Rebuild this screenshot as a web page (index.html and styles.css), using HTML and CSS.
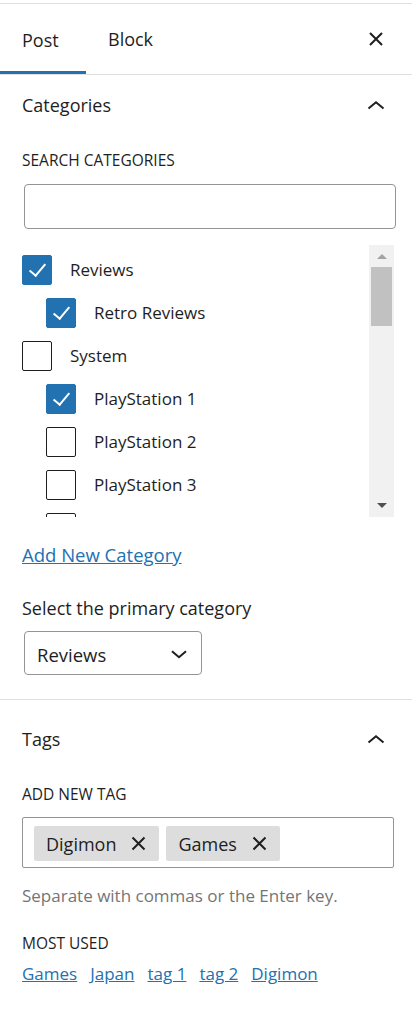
FILE: index.html
```html
<html>
	<head>
		<title>Post settings</title>
		<link rel="stylesheet" href="styles.css">
	</head>
	<body>
	<div class="sidebar">
		<div class="tabs">
			<div class="tab active">Post</div>
			<div class="tab">Block</div>
			<div class="close">
				<svg width="16" height="16" viewBox="0 0 16 16"><path d="M2 2L14 14M14 2L2 14" stroke="#1e1e1e" stroke-width="2" fill="none"/></svg>
			</div>
		</div>

		<div class="panel">
			<div class="panel-title">
				<span>Categories</span>
				<svg class="chev" width="18" height="10" viewBox="0 0 18 10"><path d="M1.5 8.5L9 2.2L16.5 8.5" stroke="#1e1e1e" stroke-width="2" fill="none"/></svg>
			</div>
			<div class="label">SEARCH CATEGORIES</div>
			<input class="search" type="text">

			<div class="catlist">
				<div class="items">
					<div class="row"><span class="box checked"></span>Reviews</div>
					<div class="row child"><span class="box checked"></span>Retro Reviews</div>
					<div class="row"><span class="box"></span>System</div>
					<div class="row child"><span class="box checked"></span>PlayStation 1</div>
					<div class="row child"><span class="box"></span>PlayStation 2</div>
					<div class="row child"><span class="box"></span>PlayStation 3</div>
					<div class="row child"><span class="box"></span></div>
				</div>
				<div class="scrollbar">
					<div class="arrow up"></div>
					<div class="thumb"></div>
					<div class="spacer"></div>
					<div class="arrow down"></div>
				</div>
			</div>

			<a class="link addnew" href="#">Add New Category</a>
			<div class="primary-label">Select the primary category</div>
			<div class="select">
				<span>Reviews</span>
				<svg width="16" height="9" viewBox="0 0 16 9"><path d="M1 1.2L8 7.2L15 1.2" stroke="#1e1e1e" stroke-width="2" fill="none"/></svg>
			</div>
		</div>

		<div class="panel tags-panel">
			<div class="panel-title">
				<span>Tags</span>
				<svg class="chev" width="18" height="10" viewBox="0 0 18 10"><path d="M1.5 8.5L9 2.2L16.5 8.5" stroke="#1e1e1e" stroke-width="2" fill="none"/></svg>
			</div>
			<div class="label">ADD NEW TAG</div>
			<div class="token-field">
				<span class="token">Digimon <svg width="15" height="15" viewBox="0 0 15 15"><path d="M1.5 1.5L13.5 13.5M13.5 1.5L1.5 13.5" stroke="#1e1e1e" stroke-width="2" fill="none"/></svg></span>
				<span class="token">Games <svg width="15" height="15" viewBox="0 0 15 15"><path d="M1.5 1.5L13.5 13.5M13.5 1.5L1.5 13.5" stroke="#1e1e1e" stroke-width="2" fill="none"/></svg></span>
			</div>
			<div class="help">Separate with commas or the Enter key.</div>
			<div class="label most">MOST USED</div>
			<div class="most-used">
				<a class="link" href="#">Games</a>
				<a class="link" href="#">Japan</a>
				<a class="link" href="#">tag 1</a>
				<a class="link" href="#">tag 2</a>
				<a class="link" href="#">Digimon</a>
			</div>
		</div>
	</div>
	</body>
</html>
```

FILE: styles.css
```css
body{
	margin: 0;
	background: #fff;
	color: #1e1e1e;
	font-family: "Open Sans", "Noto Sans", sans-serif;
	font-size: 17px;
}
.sidebar{
	width: 412px;
	padding-top: 3px;
}
.tabs{
	display: flex;
	align-items: center;
	height: 70px;
	border-top: 1px solid #e0e0e0;
	border-bottom: 1px solid #e0e0e0;
}
.tab{
	height: 70px;
	line-height: 70px;
	padding: 0 22px;
	font-size: 18px;
	box-sizing: border-box;
}
.tab.active{
	width: 86px;
	border-bottom: 3px solid #2271b1;
	line-height: 67px;
	padding-top: 3px;
}
.close{
	margin-left: auto;
	margin-right: 28px;
	height: 16px;
}
.panel{
	padding: 0 16px 24px 22px;
	border-bottom: 1px solid #e0e0e0;
}
.panel-title{
	display: flex;
	justify-content: space-between;
	align-items: center;
	height: 60px;
	font-size: 18px;
}
.chev{
	margin-right: 11px;
}
.label{
	margin-top: 13px;
	font-size: 15.5px;
	line-height: 24px;
}
.search{
	display: block;
	width: 372px;
	height: 45px;
	margin: 12px 0 0 2px;
	border: 1px solid #949494;
	border-radius: 4px;
}
.catlist{
	display: flex;
	height: 272px;
	margin-top: 16px;
	overflow: hidden;
}
.items{
	flex: 1;
	padding-top: 10px;
}
.row{
	display: flex;
	align-items: center;
	height: 30px;
	margin-bottom: 13px;
	line-height: 30px;
}
.row.child{
	padding-left: 24px;
}
.box{
	width: 30px;
	height: 30px;
	box-sizing: border-box;
	border: 1px solid #1e1e1e;
	border-radius: 2px;
	margin-right: 18px;
	flex: none;
	position: relative;
}
.box.checked{
	background: #2271b1;
	border-color: #2271b1;
}
.box.checked::after{
	content: "";
	position: absolute;
	left: 10px;
	top: 4px;
	width: 7px;
	height: 14px;
	border-right: 2px solid #fff;
	border-bottom: 2px solid #fff;
	transform: rotate(40deg);
}
.scrollbar{
	width: 25px;
	margin-right: 2px;
	background: #f1f1f1;
	display: flex;
	flex-direction: column;
	align-items: center;
}
.arrow{
	width: 0;
	height: 0;
	border-left: 5px solid transparent;
	border-right: 5px solid transparent;
	margin: 9px 0 8px;
}
.arrow.up{
	border-bottom: 5px solid #a3a3a3;
}
.arrow.down{
	border-top: 5px solid #505050;
	margin: 8px 0 9px;
}
.thumb{
	width: 21px;
	height: 59px;
	background: #c1c1c1;
}
.spacer{
	flex: 1;
}
.link{
	color: #2271b1;
	text-decoration: underline;
	font-size: 18.5px;
}
.addnew{
	display: block;
	margin-top: 25px;
	line-height: 26px;
}
.primary-label{
	margin-top: 27px;
	font-size: 18px;
	line-height: 26px;
}
.select{
	display: flex;
	justify-content: space-between;
	align-items: center;
	width: 178px;
	height: 44px;
	box-sizing: border-box;
	margin: 10px 0 0 2px;
	padding: 2px 14px 0 12px;
	border: 1px solid #949494;
	border-radius: 4px;
	font-size: 18.5px;
}
.tags-panel{
	border-bottom: none;
}
.tags-panel .panel-title{
	margin-top: 9px;
}
.token-field{
	display: flex;
	gap: 7px;
	width: 372px;
	height: 51px;
	box-sizing: border-box;
	margin-top: 11px;
	padding: 8px 11px;
	border: 1px solid #949494;
	border-radius: 2px;
}
.token{
	display: flex;
	align-items: center;
	gap: 15px;
	height: 35px;
	padding: 0 13px 0 12px;
	background: #ddd;
	border-radius: 2px;
	font-size: 18px;
}
.help{
	margin-top: 16px;
	color: #757575;
	font-size: 17px;
	line-height: 24px;
}
.most{
	margin-top: 23px;
}
.most-used{
	display: flex;
	gap: 13px;
	margin-top: 7px;
}
.most-used .link{
	font-size: 17px;
	line-height: 24px;
}
```
